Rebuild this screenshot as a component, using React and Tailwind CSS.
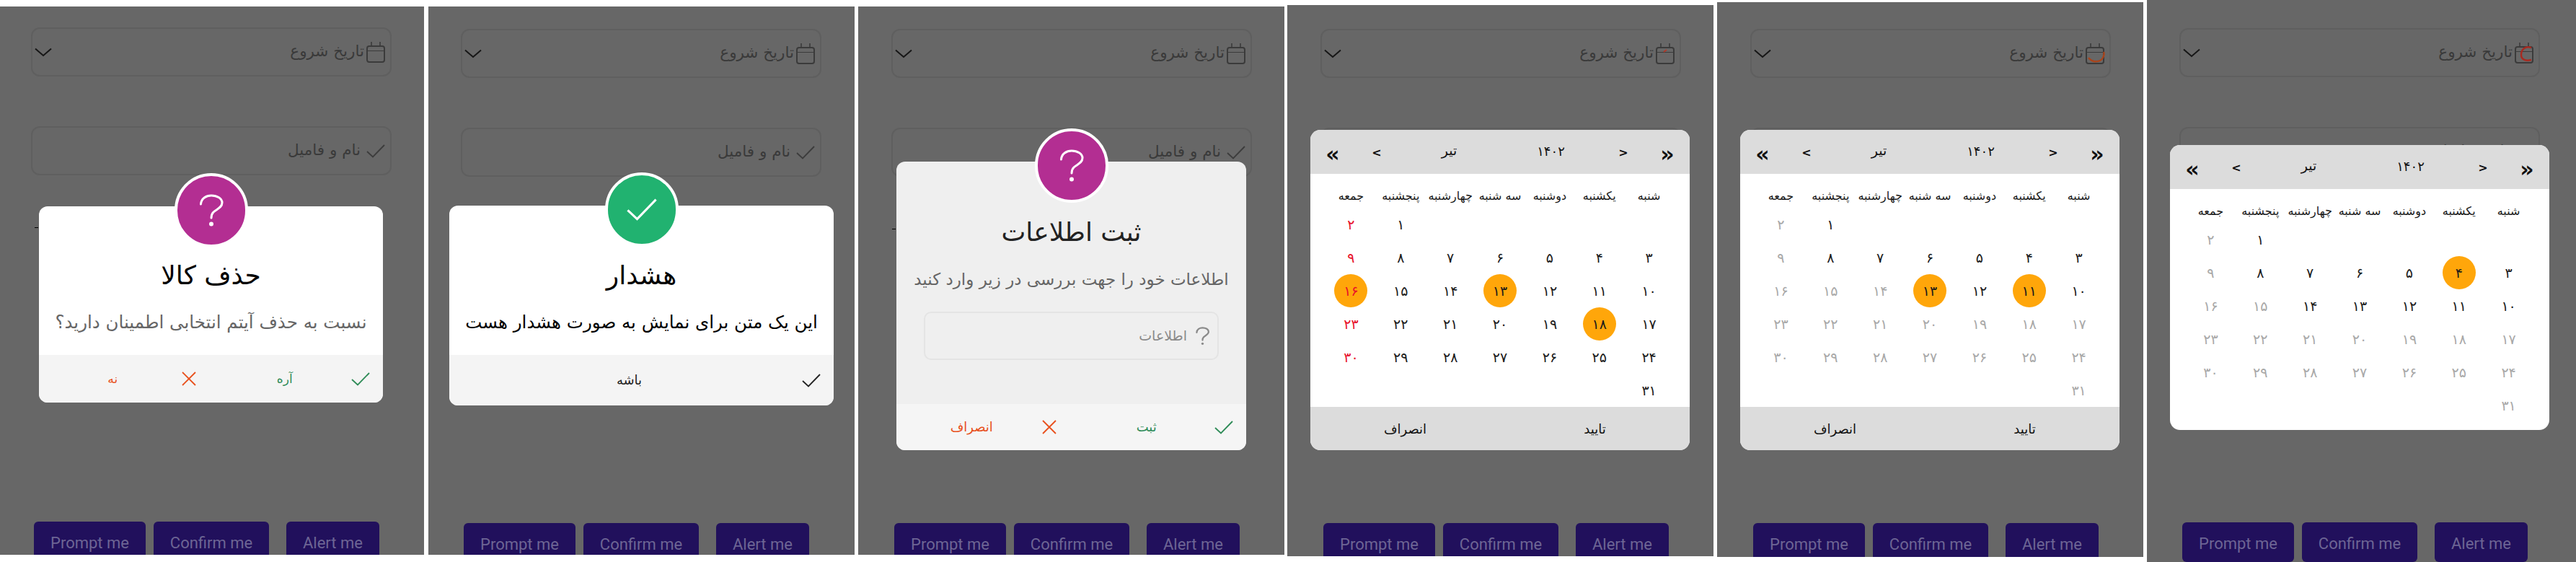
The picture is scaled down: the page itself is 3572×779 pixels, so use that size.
const weekDays = ["شنبه", "یکشنبه", "دوشنبه", "سه شنبه", "چهارشنبه", "پنجشنبه", "جمعه"];

const toFa = (n) => String(n).replace(/\d/g, (d) => "۰۱۲۳۴۵۶۷۸۹"[d]);

function Chevron() {
  return (
    <svg width="24" height="13" viewBox="0 0 24 13" fill="none" stroke="#161616" strokeWidth="2">
      <path d="M1 1.5 L12 11 L23 1.5" />
    </svg>
  );
}

function Check({ color = "#3c3c3c", w = 26, h = 19, sw = 1.8 }) {
  return (
    <svg width={w} height={h} viewBox="0 0 26 19" fill="none" stroke={color} strokeWidth={sw}>
      <path d="M1 10 L9 17.5 L25 1" />
    </svg>
  );
}

function Cross() {
  return (
    <svg width="20" height="20" viewBox="0 0 20 20" fill="none" stroke="#e8501c" strokeWidth="1.8">
      <path d="M1 1 L19 19 M19 1 L1 19" />
    </svg>
  );
}

function Question({ color = "white", w = 34, h = 46, sw = 3 }) {
  return (
    <svg width={w} height={h} viewBox="0 0 34 46" fill="none" stroke={color} strokeWidth={sw} strokeLinecap="round">
      <path d="M2.5 14 C3 6 10 2 17 2 C25 2 32 6 32 12 C32 19 24 21 20 25 C17.5 27.5 17 30 17 33" />
      <circle cx="17" cy="41.5" r="3" fill={color} stroke="none" />
    </svg>
  );
}

function CalendarIcon({ mark }) {
  return (
    <svg width="26" height="30" viewBox="0 0 26 30" fill="none" stroke="#3b3b3b" strokeWidth="2" className="overflow-visible">
      <rect x="1" y="7" width="24" height="22" rx="3" />
      <path d="M1 13.5 H25" strokeWidth="1" />
      <path d="M7 1 V7 M19 1 V7" strokeWidth="1.6" />
      {mark === "tick" && <path d="M11 13 L15 10" stroke="#b03a2a" />}
      {mark === "smile" && <path d="M4 21 C9 28 20 28 24 21 C26 17 26 15 25 13" stroke="#a8441c" strokeWidth="2.4" />}
      {mark === "c" && <path d="M23 8 C13 5 9 12 9 18 C9 25 16 27 23 25" stroke="#a82a20" strokeWidth="2.4" />}
    </svg>
  );
}

function Field({ icon, label, trailing, labelClass }) {
  return (
    <div dir="rtl" className="flex items-center h-[68px] w-[500px] rounded-[12px] border-2 border-[#5f5f5f] pr-[6px] pl-[3px]">
      <span className="flex w-[28px] shrink-0 justify-center">{icon}</span>
      <span className={`text-[21.5px] text-[#3a3a3a] leading-none -mt-[3px] whitespace-nowrap ${labelClass}`}>{label}</span>
      <span className="mr-auto">{trailing}</span>
    </div>
  );
}

function PageButtons() {
  return (
    <div className="flex mt-[480px] ml-[4px] font-['Roboto',sans-serif] text-[22px] text-[#6d6594]">
      <div className="flex h-[55px] w-[155px] items-center justify-center rounded-[6px] bg-[#21105c] pt-[3px]">Prompt me</div>
      <div className="flex h-[55px] w-[160px] ml-[11px] items-center justify-center rounded-[6px] bg-[#21105c] pt-[3px]">Confirm me</div>
      <div className="flex h-[55px] w-[129px] ml-[24px] items-center justify-center rounded-[6px] bg-[#21105c] pt-[3px]">Alert me</div>
    </div>
  );
}

function Phone({ className, mark, children }) {
  return (
    <div className={`relative shrink-0 overflow-hidden bg-[#676767] ${className}`}>
      <Field icon={<CalendarIcon mark={mark} />} label="تاریخ شروع" trailing={<Chevron />} labelClass="mr-[2px]" />
      <div className="mt-[69px]">
        <Field icon={<Check />} label="نام و فامیل" labelClass="mr-[7px]" />
      </div>
      <PageButtons />
      {children}
    </div>
  );
}

function Badge({ green }) {
  return (
    <div
      className={`absolute left-1/2 -top-[46px] flex h-[103px] w-[102px] -translate-x-1/2 items-center justify-center rounded-full border-[4px] border-white ${
        green ? "bg-[#21b270]" : "bg-[#b32e92]"
      }`}
    >
      {green ? <Check color="white" w={46} h={31} sw={1.9} /> : <Question />}
    </div>
  );
}

function FooterAction({ icon, label, color, size }) {
  return (
    <div className={`flex flex-1 items-center pr-[18px] ${color}`}>
      <span className="flex w-[26px] justify-center">{icon}</span>
      <span className={`flex-1 text-center pl-[10px] leading-none ${size}`}>{label}</span>
    </div>
  );
}

function Dialog({ className, bodyClass, green, title, titleClass, message, messageClass, footerClass, yes, no, size, dash, children }) {
  return (
    <div dir="rtl" className={`absolute rounded-[12px] ${className}`}>
      <Badge green={green} />
      {dash && <span className={`absolute h-[1px] w-[5px] bg-black ${dash}`} />}
      <div className={`flex flex-col items-center rounded-t-[12px] ${bodyClass}`}>
        <h2 className={`h-[44px] text-[36px] font-normal leading-[44px] whitespace-nowrap ${titleClass}`}>{title}</h2>
        <p className={`mt-[23px] h-[40px] leading-[40px] whitespace-nowrap ${messageClass}`}>{message}</p>
        {children}
      </div>
      <div className={`flex rounded-b-[12px] ${footerClass}`}>
        <FooterAction icon={<Check color={green ? "#222" : "#2e8b57"} />} label={yes} size={size} color={green ? "text-[#222]" : "text-[#2e8b57]"} />
        {no && <FooterAction icon={<Cross />} label={no} size={size} color="text-[#e8501c]" />}
      </div>
    </div>
  );
}

function Calendar({ className, picked, active, fridayRed, footer }) {
  const cells = [...Array(5).fill(null), ...Array.from({ length: 31 }, (_, i) => i + 1)];
  const dayColor = (day, i) => {
    if (fridayRed && i % 7 === 6) return "text-[#e8102a]";
    if (!active || active.includes(day) || picked.includes(day)) return "text-[#1a1a1a]";
    return "text-[#a8a8a8]";
  };
  return (
    <div className={`absolute w-[526px] overflow-hidden rounded-[14px] bg-white ${className}`}>
      <div className="grid h-[61px] grid-cols-[62px_60px_141px_141px_60px_62px] items-center bg-[#dcdcdc] text-center text-[#111]">
        <span className="text-[30px] font-bold leading-none pt-[6px]">«</span>
        <span className="text-[16px] font-bold pt-[3px]">{"<"}</span>
        <span className="text-[19px] -mt-[4px]">تیر</span>
        <span className="text-[18px] -mt-[3px]">{toFa(1402)}</span>
        <span className="text-[16px] font-bold pt-[3px]">{">"}</span>
        <span className="text-[30px] font-bold leading-none pt-[6px]">»</span>
      </div>
      <div dir="rtl" className="grid grid-cols-7 px-[22px]">
        {weekDays.map((d) => (
          <div key={d} className="flex h-[47px] items-center justify-center pt-[14px] text-[16px] text-[#1a1a1a] whitespace-nowrap">
            {d}
          </div>
        ))}
        {cells.map((day, i) => (
          <div key={i} className="flex h-[46px] items-center justify-center text-[19px]">
            {day && (
              <span className={`flex h-[46px] w-[46px] items-center justify-center rounded-full ${picked.includes(day) ? "bg-[#ffa60a]" : ""} ${dayColor(day, i)}`}>
                {toFa(day)}
              </span>
            )}
          </div>
        ))}
      </div>
      {footer ? (
        <div dir="rtl" className="grid h-[60px] grid-cols-2 items-center bg-[#dcdcdc] text-center text-[18px] text-[#111]">
          <span>تایید</span>
          <span>انصراف</span>
        </div>
      ) : (
        <div className="h-[11px]" />
      )}
    </div>
  );
}

export default function App() {
  return (
    <div className="flex h-[779px] w-[3572px] items-start overflow-hidden bg-white font-['DejaVu_Sans',sans-serif]">
      <Phone className="mt-[9px] h-[760px] w-[588px] pt-[29px] pl-[43px]">
        <Dialog
          className="left-[54px] top-[277px] w-[477px] bg-white"
          bodyClass="pt-[74px] h-[206px]"
          title="حذف کالا"
          titleClass="text-black"
          message="نسبت به حذف آیتم انتخابی اطمینان دارید؟"
          messageClass="text-[24.5px] text-[#666]"
          footerClass="h-[66px] bg-[#f4f4f4]"
          yes="آره"
          no="نه"
          size="text-[17px]"
          dash="-left-[6px] top-[29px]"
        />
      </Phone>
      <Phone className="ml-[6px] mt-[9px] h-[760px] w-[591px] pt-[31px] pl-[45px]">
        <Dialog
          green
          className="left-[29px] top-[276px] w-[533px] bg-white"
          bodyClass="pt-[75px] h-[207px]"
          title="هشدار"
          titleClass="text-black"
          message="این یک متن برای نمایش به صورت هشدار هست"
          messageClass="text-[24.5px] text-black"
          footerClass="h-[70px] bg-[#f4f4f4]"
          yes="باشه"
          size="text-[18px]"
        />
      </Phone>
      <Phone className="ml-[5px] mt-[9px] h-[760px] w-[591px] pt-[31px] pl-[46px]">
        <Dialog
          className="left-[53px] top-[215px] w-[485px] bg-[#efefef]"
          bodyClass="pt-[76px] h-[336px]"
          title="ثبت اطلاعات"
          titleClass="text-[#222]"
          message="اطلاعات خود را جهت بررسی در زیر وارد کنید"
          messageClass="text-[23px] text-[#666]"
          footerClass="h-[64px] bg-[#f5f5f5]"
          yes="ثبت"
          no="انصراف"
          size="text-[18px]"
          dash="-left-[6px] top-[93px]"
        >
          <div className="mt-[25px] flex h-[67px] w-[409px] items-center rounded-[10px] border-2 border-[#e4e4e4] pr-[11px]">
            <Question color="#8a8a8a" w={19} h={26} sw={4} />
            <span className="mr-[12px] text-[19px] text-[#8a8a8a]">اطلاعات</span>
          </div>
        </Dialog>
      </Phone>
      <Phone className="ml-[4px] mt-[7px] h-[764px] w-[591px] pt-[33px] pl-[46px]" mark="tick">
        <Calendar className="left-[32px] top-[173px]" picked={[13, 16, 18]} fridayRed footer />
      </Phone>
      <Phone className="ml-[5px] mt-[3px] h-[769px] w-[591px] pt-[37px] pl-[46px]" mark="smile">
        <Calendar className="left-[32px] top-[177px]" picked={[11, 13]} active={[1, 3, 4, 5, 6, 7, 8, 10, 12]} footer />
      </Phone>
      <Phone className="ml-[5px] h-[779px] w-[595px] pt-[39px] pl-[45px]" mark="c">
        <Calendar className="left-[32px] top-[201px]" picked={[4]} active={[1, 3, 5, 6, 7, 8, 10, 11, 12, 13, 14]} />
      </Phone>
    </div>
  );
}
